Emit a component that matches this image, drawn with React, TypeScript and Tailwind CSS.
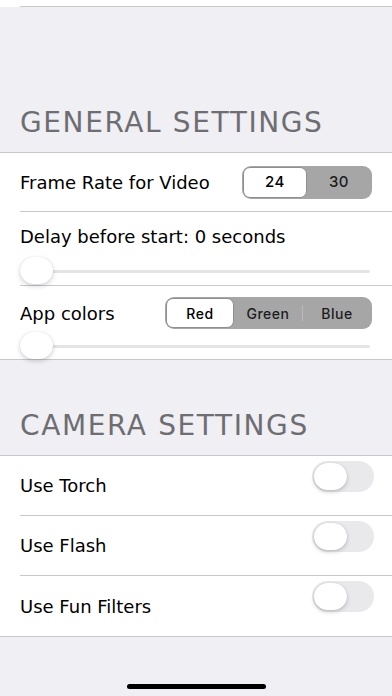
import React from 'react';

const Separator = 'border-b border-[#c8c7cc]';

const Segmented: React.FC<{ items: string[]; selected: number; segWidth: string; textSize: string }> = ({
  items,
  selected,
  segWidth,
  textSize,
}) => (
  <div className="flex items-stretch h-full rounded-[9px] bg-[#a6a6a6] p-[1px] font-['Inter',sans-serif] font-medium tracking-[0.5px]">
    {items.map((item, i) => (
      <div key={item} className="flex items-center">
        {i > 0 && i !== selected && i - 1 !== selected ? <div className="w-px h-[16px] bg-[#b9b9b9]" /> : null}
        <div
          className={
            i === selected
              ? `${segWidth} h-full flex items-center justify-center rounded-[7px] bg-white border border-[#8f8f8f] ${textSize} text-black`
              : `${segWidth} h-full flex items-center justify-center ${textSize} text-[#1c1c1e]`
          }
        >
          {item}
        </div>
      </div>
    ))}
  </div>
);

const Slider: React.FC = () => (
  <div className="relative h-[27px]">
    <div className="absolute left-5 right-[22px] top-[13px] h-[3px] rounded-full bg-[#e4e4e6]" />
    <div className="absolute left-[20px] top-0 w-[33px] h-[27px] rounded-full bg-white shadow-[0_2px_5px_rgba(0,0,0,0.18),0_0_1px_rgba(0,0,0,0.15)]" />
  </div>
);

const Toggle: React.FC = () => (
  <div className="self-start mt-[5px] w-[62px] h-[31px] rounded-full bg-[#e9e9eb] p-[2px]">
    <div className="w-[33px] h-[27px] rounded-full bg-white shadow-[0_2px_4px_rgba(0,0,0,0.18),0_0_1px_rgba(0,0,0,0.2)]" />
  </div>
);

const ToggleRow: React.FC<{ label: string; last?: boolean }> = ({ label, last }) => (
  <div className="pl-5">
    <div className={`h-[60px] flex items-center justify-between pr-[18px] ${last ? '' : Separator}`}>
      <span className="text-[18px] text-black">{label}</span>
      <Toggle />
    </div>
  </div>
);

export default function App() {
  return (
    <div className="w-[392px] h-[696px] overflow-hidden bg-[#efeff4] font-['DejaVu_Sans',sans-serif] flex flex-col">
      <div className="h-[7px] bg-white pl-5">
        <div className={`h-[7px] ${Separator}`} />
      </div>

      <div className="h-[145px] flex items-end px-5 pb-[13px]">
        <h2 className="text-[28px] leading-[32px] tracking-[1.6px] text-[#6d6d72]">GENERAL SETTINGS</h2>
      </div>

      <section className="bg-white border-y border-[#c8c7cc]">
        <div className="pl-5">
          <div className={`h-[59px] flex items-center justify-between pr-5 ${Separator}`}>
            <span className="text-[18px] text-black">Frame Rate for Video</span>
            <div className="h-[33px]">
              <Segmented items={['24', '30']} selected={0} segWidth="w-[64px]" textSize="text-[15px]" />
            </div>
          </div>
        </div>

        <div className="pt-[14px] pb-[2px]">
          <div className="pl-5 text-[18px] leading-[22px] text-black">Delay before start: 0 seconds</div>
          <div className="mt-[9px]">
            <Slider />
          </div>
          <div className="pl-5 mt-[1px]">
            <div className={Separator} />
          </div>
        </div>

        <div className="pt-[9px]">
          <div className="flex items-center justify-between pl-5 pr-5">
            <span className="text-[18px] text-black">App colors</span>
            <div className="h-[32px]">
              <Segmented items={['Red', 'Green', 'Blue']} selected={0} segWidth="w-[68px]" textSize="text-[14px]" />
            </div>
          </div>
          <div className="mt-[3px]">
            <Slider />
          </div>
        </div>
      </section>

      <div className="h-[95px] flex items-end px-5 pb-[13px]">
        <h2 className="text-[28px] leading-[32px] tracking-[1.6px] text-[#6d6d72]">CAMERA SETTINGS</h2>
      </div>

      <section className="bg-white border-y border-[#c8c7cc]">
        <ToggleRow label="Use Torch" />
        <ToggleRow label="Use Flash" />
        <ToggleRow label="Use Fun Filters" last />
      </section>

      <div className="mt-[47px] mx-auto w-[139px] h-[5px] rounded-full bg-black" />
    </div>
  );
}
